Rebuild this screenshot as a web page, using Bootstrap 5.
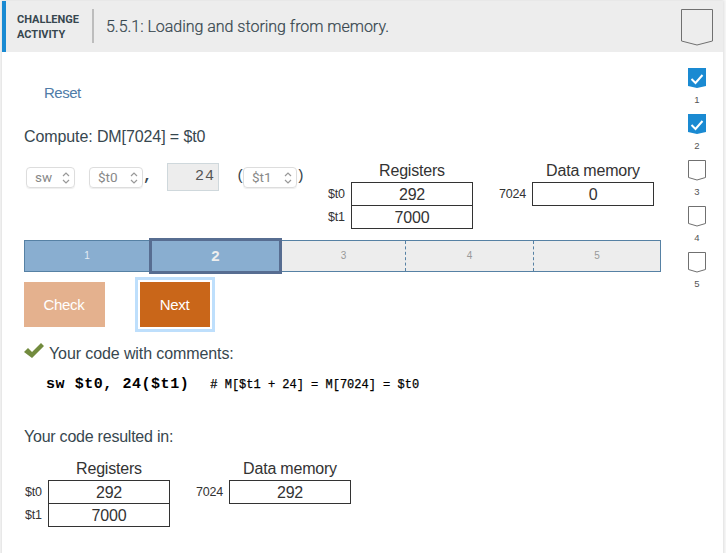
<!DOCTYPE html>
<html lang="en">
<head>
<meta charset="utf-8">
<meta name="viewport" content="width=device-width, initial-scale=1">
<title>Challenge activity 5.5.1</title>
<link href="https://cdn.jsdelivr.net/npm/bootstrap@5.3.0/dist/css/bootstrap.min.css" rel="stylesheet">
<style>
body{background:#fafafa;color:#37474f;font:16px/24px "Liberation Sans",Arial,sans-serif;overflow:hidden}
.activity{width:721px;height:560px;margin:1px 0 0 2px;background:#fff;box-shadow:0 0 3px 1px #ddd}
.activity-head{height:51px;background:#ededed;border-left:4px solid #1a8ad2;font-family:Roboto,sans-serif}
.kind{width:75px;margin-left:11px;padding-top:11px;font-size:11px;line-height:15px;font-weight:700;white-space:nowrap}
.rule{width:2px;height:34px;background:#bdbdbd}
.title{margin-left:12px;font-size:16px;font-weight:300;line-height:24px;letter-spacing:-.02px;-webkit-text-stroke:.2px #37474f}
.head-flag{margin:7px 10px 0 auto}
.work{width:637px;margin-left:22px}
.reset{height:24px;margin:29px 0 0 20px;font-size:15px;color:#4f7ca8;letter-spacing:-.5px;text-decoration:none}
.prompt{height:24px;margin-top:20px;letter-spacing:-.1px}
.tools{height:71px;margin-top:12px}
.code-line{width:304px;padding-top:6px}
.pick{height:21px;border:1px solid #ddd;border-radius:4px;color:#888;font:13.5px/19px Roboto,sans-serif;padding:0 4px 0 8px;box-shadow:0 1px 1px #eee}
.sw{width:49px;margin-left:2px}.t0{width:54px;margin-left:14px}.t1{width:54px}
.sym{font:bold 15px/20px "Liberation Mono",monospace;width:10px;color:#37474f}
.open-paren{width:7px;margin-left:17px}.close-paren{margin-left:-1px}
.offset{width:52px;height:28px;margin:-4px 0 0 14px;border:1px solid #cfd8dc;background:#ededed;font:15px/26px "Liberation Mono",monospace;letter-spacing:1px;text-align:right;padding-right:3px;color:#555}
.store{color:#333;letter-spacing:-.2px}
.store-names{width:23px}
.memory{margin-left:26px}
.memory .store-names{width:33px}
.store-title{width:122px;height:21px;line-height:19px;text-align:center;white-space:nowrap}
.store-label{height:23px;line-height:24px;font-size:12.5px}
.store-cell{width:122px;height:24px;line-height:23px;border:1px solid #333;text-align:center;margin-bottom:-1px}
.outcome{margin-top:10px;padding-left:1px}
.levels{height:32px;margin-top:8px;border:1px solid #5681a4;background:#ededed;font-size:10px;color:#999}
.level{height:30px}
.l1{width:124px;background:#89aed0;color:#e4edf5}
.l2{width:133px;height:36px;border:3px solid #576d91;background:#89aed0;color:#eee;font-size:15px;font-weight:700}
.l3{width:123px}
.l4{width:128px;border-left:1px dashed #5681a4}
.l5{width:127px;border-left:1px dashed #5681a4}
.actions{height:55px;margin-top:5px}
.act{height:45px;border:0;border-radius:0;font-size:15px;color:#fff;letter-spacing:-.3px;padding:1px 1px 0 0}
.check{width:81px;background:#e4b18e}
.next{width:70px;margin-left:35px;background:#c96619;box-shadow:0 0 0 2px #fff,0 0 0 5px #bedffc}
.check:hover,.next:hover{color:#fff}
.comments{height:24px;margin-top:10px;letter-spacing:-.1px}
.listing{height:24px;margin:7px 0 0 22px;color:#000;font-family:"Liberation Mono",monospace;font-size:15px;letter-spacing:.55px;font-weight:700;white-space:pre;line-height:24px}
.note{margin-left:21px;font-size:12px;letter-spacing:0;font-weight:400;-webkit-text-stroke:.25px #000}
.result{height:24px;margin-top:28px;letter-spacing:-.23px}
.steps{width:24px;margin-left:24px;padding-top:16px}
.step{height:46px;font-size:9.5px;line-height:11px;color:#555}
.step svg{margin-bottom:5px}
</style>
<script src="https://cdn.jsdelivr.net/npm/bootstrap@5.3.0/dist/js/bootstrap.bundle.min.js"></script>
</head>
<body>
<svg class="d-none">
<symbol id="done" viewBox="0 0 18 21"><path d="M0 0H18V18L9 20L0 18Z" fill="#1a8ad2"/><path d="M3.5 11l4 4 7-8" fill="none" stroke="#fff" stroke-width="2"/></symbol>
<symbol id="todo" viewBox="0 0 18 21"><path d="M.5.5H17.5V17.5L9 20L.5 17.5Z" fill="#fff" stroke="#707070"/></symbol>
<symbol id="arrows" viewBox="0 0 8 12"><path d="M1 4l3-3 3 3M1 8l3 3 3-3" fill="none" stroke="#999" stroke-width="1.2"/></symbol>
</svg>
<main class="activity">
<header class="activity-head d-flex">
<div class="kind">CHALLENGE<br>ACTIVITY</div><div class="rule mt-2"></div>
<div class="title align-self-center">5.5.1: Loading and storing from memory.</div>
<svg class="head-flag" width="32" height="38" viewBox="0 0 32 38"><path d="M.5 1.5H31.5V33L16 37L.5 33Z" fill="#ededed" stroke="#707070"/></svg>
</header>
<div class="d-flex">
<section class="work d-flex flex-column">
<a class="reset" href="#">Reset</a>
<div class="prompt">Compute: DM[7024] = $t0</div>
<div class="tools d-flex align-items-start">
<div class="code-line d-flex align-items-start">
<div class="pick sw d-flex align-items-center justify-content-between">sw<svg width="8" height="12"><use href="#arrows"/></svg></div>
<div class="pick t0 d-flex align-items-center justify-content-between">$t0<svg width="8" height="12"><use href="#arrows"/></svg></div>
<span class="sym">,</span>
<div class="offset">24</div>
<span class="sym open-paren fw-normal">(</span>
<div class="pick t1 d-flex align-items-center justify-content-between">$t1<svg width="8" height="12"><use href="#arrows"/></svg></div>
<span class="sym close-paren fw-normal">)</span>
</div>
<div class="store d-flex">
<div class="store-names"><div class="store-title w-auto"></div><div class="store-label">$t0</div><div class="store-label">$t1</div></div>
<div class="store-body"><div class="store-title">Registers</div><div class="store-cell">292</div><div class="store-cell">7000</div></div>
</div>
<div class="store memory d-flex">
<div class="store-names"><div class="store-title w-auto"></div><div class="store-label">7024</div></div>
<div class="store-body"><div class="store-title">Data memory</div><div class="store-cell">0</div></div>
</div>
</div>
<div class="levels d-flex align-items-center text-center">
<div class="level l1 d-flex align-items-center justify-content-center">1</div>
<div class="level l2 d-flex align-items-center justify-content-center flex-shrink-0">2</div>
<div class="level l3 d-flex align-items-center justify-content-center">3</div>
<div class="level l4 d-flex align-items-center justify-content-center">4</div>
<div class="level l5 d-flex align-items-center justify-content-center">5</div>
</div>
<div class="actions d-flex align-items-center"><button class="btn act check">Check</button><button class="btn act next">Next</button></div>
<div class="comments d-flex"><svg width="25" height="20" viewBox="0 0 25 20"><path d="M0 10L4 6L8 10L17 1L20 4L8 16Z" fill="#728b3e"/></svg>Your code with comments:</div>
<div class="listing d-flex"><span>sw $t0, 24($t1)</span><span class="note"># M[$t1 + 24] = M[7024] = $t0</span></div>
<div class="result">Your code resulted in:</div>
<div class="outcome d-flex">
<div class="store d-flex">
<div class="store-names"><div class="store-title w-auto"></div><div class="store-label">$t0</div><div class="store-label">$t1</div></div>
<div class="store-body"><div class="store-title">Registers</div><div class="store-cell">292</div><div class="store-cell">7000</div></div>
</div>
<div class="store memory d-flex">
<div class="store-names"><div class="store-title w-auto"></div><div class="store-label">7024</div></div>
<div class="store-body"><div class="store-title">Data memory</div><div class="store-cell">292</div></div>
</div>
</div>
</section>
<aside class="steps">
<div class="step d-flex flex-column align-items-center"><svg width="18" height="21"><use href="#done"/></svg>1</div>
<div class="step d-flex flex-column align-items-center"><svg width="18" height="21"><use href="#done"/></svg>2</div>
<div class="step d-flex flex-column align-items-center"><svg width="18" height="21"><use href="#todo"/></svg>3</div>
<div class="step d-flex flex-column align-items-center"><svg width="18" height="21"><use href="#todo"/></svg>4</div>
<div class="step d-flex flex-column align-items-center"><svg width="18" height="21"><use href="#todo"/></svg>5</div>
</aside>
</div>
</main>
</body>
</html>
